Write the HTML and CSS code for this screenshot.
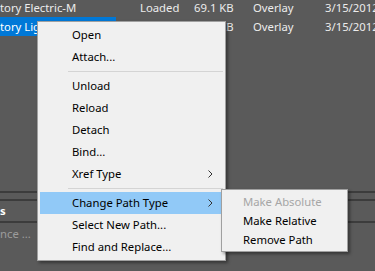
FILE: index.html
```html
<!DOCTYPE html>
<html>
  <head>
    <title>External References</title>
    <link rel="stylesheet" href="styles.css">
  </head>
  <body>
    <div class="screen">
      <div class="file-list">
        <div class="row">
          <span class="cell name">tory Electric-M</span>
          <span class="cell">Loaded</span>
          <span class="cell">69.1 KB</span>
          <span class="cell">Overlay</span>
          <span class="cell">3/15/2012</span>
        </div>
        <div class="row selected">
          <span class="cell name">tory Lighting-M</span>
          <span class="cell">Loaded</span>
          <span class="cell">48.3 KB</span>
          <span class="cell">Overlay</span>
          <span class="cell">3/15/2012</span>
        </div>
      </div>
      <div class="details">
        <div class="details-head">s</div>
        <div class="details-row">nce ...</div>
      </div>

      <div class="menu context-menu">
        <div class="menu-item">Open</div>
        <div class="menu-item">Attach...</div>
        <div class="menu-sep"></div>
        <div class="menu-item">Unload</div>
        <div class="menu-item">Reload</div>
        <div class="menu-item">Detach</div>
        <div class="menu-item">Bind...</div>
        <div class="menu-item">Xref Type
          <svg class="chevron" width="5" height="8" viewBox="0 0 5 8"><polyline points="0.5,0.5 4,4 0.5,7.5" fill="none" stroke="#333" stroke-width="1"/></svg>
        </div>
        <div class="menu-sep"></div>
        <div class="menu-item active">Change Path Type
          <svg class="chevron" width="5" height="8" viewBox="0 0 5 8"><polyline points="0.5,0.5 4,4 0.5,7.5" fill="none" stroke="#333" stroke-width="1"/></svg>
        </div>
        <div class="menu-item">Select New Path...</div>
        <div class="menu-item">Find and Replace...</div>
      </div>

      <div class="menu submenu">
        <div class="sub-item disabled">Make Absolute</div>
        <div class="sub-item">Make Relative</div>
        <div class="sub-item">Remove Path</div>
      </div>
    </div>
  </body>
</html>
```

FILE: styles.css
```css
body {
  margin: 0;
  font-family: "Noto Sans", "Open Sans", sans-serif;
  font-size: 11.3px;
  background-color: #5a5a5a;
}
.screen {
  position: relative;
  width: 375px;
  height: 271px;
  overflow: hidden;
  background-color: #5a5a5a;
  color: #ececec;
}
.file-list {
  margin-top: -2px;
  height: 193px;
}
.row {
  display: grid;
  grid-template-columns: 140px 54px 59px 72px auto;
  height: 19px;
  line-height: 19px;
  white-space: nowrap;
}
.row .name {
  width: 116px;
  overflow: hidden;
}
.row.selected .name {
  background-color: #0078d7;
  color: #fff;
}
.details {
  border-top: 2px solid #3c3c3c;
  padding-top: 6px;
}
.details-head {
  height: 20px;
  line-height: 20px;
  border-top: 2px solid #3c3c3c;
  border-bottom: 2px solid #3c3c3c;
  font-weight: bold;
  color: #fff;
}
.details-row {
  height: 22px;
  line-height: 22px;
  color: #9c9c9c;
}

/* context menus sit over the list */
.menu {
  position: absolute;
  background-color: #f0f0f0;
  border: 1px solid #a0a0a0;
  padding: 2px;
  color: #000;
  box-shadow: 2px 2px 3px rgba(0, 0, 0, 0.4);
}
.context-menu {
  left: 37px;
  top: 21px;
  width: 183px;
}
.menu-item {
  position: relative;
  height: 22px;
  line-height: 22px;
  padding-left: 32px;
  white-space: nowrap;
}
.menu-item.active {
  background-color: #91c9f7;
}
.chevron {
  position: absolute;
  right: 10px;
  top: 7px;
}
.menu-sep {
  height: 1px;
  margin: 3px 0 3px 28px;
  background-color: #d4d4d4;
}
.submenu {
  left: 221px;
  top: 189px;
  width: 121px;
}
.sub-item {
  height: 19px;
  line-height: 19px;
  padding-left: 19px;
  white-space: nowrap;
}
.sub-item.disabled {
  color: #a6a6a6;
}
```
